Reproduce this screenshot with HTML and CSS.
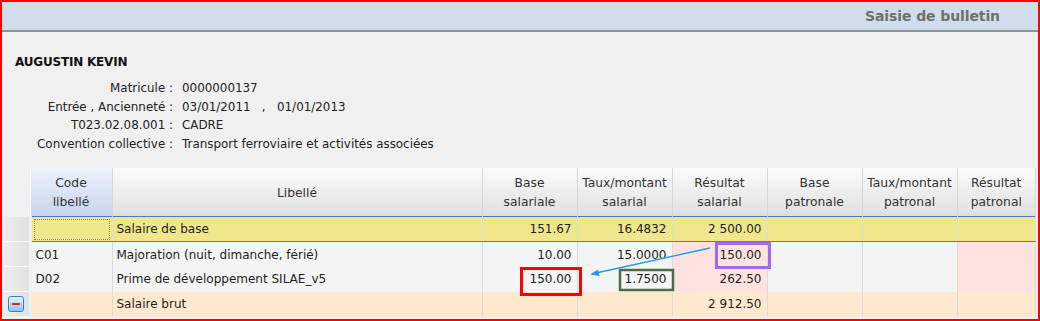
FILE: index.html
```html
<!DOCTYPE html>
<html lang="fr">
<head>
  <meta charset="UTF-8">
  <title>Saisie de bulletin</title>
  <link rel="stylesheet" href="styles.css">
</head>
<body>
  <div class="frame">
    <header class="titlebar">
      <h1>Saisie de bulletin</h1>
    </header>

    <section class="employee">
      <div class="name">AUGUSTIN KEVIN</div>
      <dl class="info">
        <dt>Matricule :</dt><dd>0000000137</dd>
        <dt>Entrée , Ancienneté :</dt><dd>03/01/2011 &nbsp;&nbsp;, &nbsp;&nbsp;01/01/2013</dd>
        <dt>T023.02.08.001 :</dt><dd>CADRE</dd>
        <dt>Convention collective :</dt><dd>Transport ferroviaire et activités associées</dd>
      </dl>
    </section>

    <div class="grid-wrap">
      <table class="grid">
        <colgroup>
          <col class="c-row"><col class="c-code"><col class="c-lib">
          <col class="c-num"><col class="c-num"><col class="c-num">
          <col class="c-num"><col class="c-num"><col>
        </colgroup>
        <thead>
          <tr>
            <th class="rowhead"></th>
            <th class="selected">Code<br>libellé</th>
            <th>Libellé</th>
            <th>Base<br>salariale</th>
            <th>Taux/montant<br>salarial</th>
            <th>Résultat<br>salarial</th>
            <th>Base<br>patronale</th>
            <th>Taux/montant<br>patronal</th>
            <th>Résultat<br>patronal</th>
          </tr>
        </thead>
        <tbody>
          <tr class="base">
            <td class="rowhead"></td>
            <td class="focus"><span></span></td>
            <td>Salaire de base</td>
            <td class="num">151.67</td>
            <td class="num">16.4832</td>
            <td class="num">2 500.00</td>
            <td></td><td></td><td></td>
          </tr>
          <tr>
            <td class="rowhead"></td>
            <td>C01</td>
            <td>Majoration (nuit, dimanche, férié)</td>
            <td class="num">10.00</td>
            <td class="num">15.0000</td>
            <td class="num res">150.00</td>
            <td></td><td></td><td class="res"></td>
          </tr>
          <tr>
            <td class="rowhead"></td>
            <td>D02</td>
            <td>Prime de développement SILAE_v5</td>
            <td class="num">150.00</td>
            <td class="num">1.7500</td>
            <td class="num res">262.50</td>
            <td></td><td></td><td class="res"></td>
          </tr>
          <tr class="total">
            <td class="rowhead"><span class="collapse"></span></td>
            <td></td>
            <td>Salaire brut</td>
            <td></td><td></td>
            <td class="num">2 912.50</td>
            <td></td><td></td><td></td>
          </tr>
        </tbody>
      </table>

      <!-- annotations drawn over the grid -->
      <svg class="marks" width="1032" height="150" viewBox="0 0 1032 150">
        <rect x="712.5" y="75.5" width="53" height="24" fill="none" stroke="#9b6cf2" stroke-width="3"/>
        <rect x="517.5" y="100.5" width="59" height="26" fill="none" stroke="#ff0000" stroke-width="3"/>
        <rect x="616" y="102" width="53" height="20" fill="none" stroke="#4e6b4c" stroke-width="2.5"/>
        <line x1="706" y1="80" x2="592" y2="105" stroke="#1e9be8" stroke-width="1.3"/>
        <path d="M586 106.5 L594 101.5 L595.5 108 Z" fill="#1e9be8"/>
      </svg>
    </div>
  </div>
</body>
</html>
```

FILE: styles.css
```css
/* reset */
* { margin:0; padding:0; box-sizing:border-box }
html, body { height:100%; }
body { background:#fff; }

/* outer red frame */
.frame {
  width:1040px; height:321px;
  border:2px solid #ff0000;
  background:#f0f0f0;
  overflow:hidden;
  font-family:"DejaVu Sans", sans-serif;
  color:#222;
}

/* title bar */
.titlebar {
  height:30px;
  background:#d0dded;
  border-bottom:2px solid #8e9398;
  display:flex; justify-content:flex-end; align-items:center;
  padding-right:38px;
}
.titlebar h1 {
  font-size:14px; font-weight:bold;
  color:#6f6f6f;
  letter-spacing:-0.1px;
}

/* employee block */
.employee { padding:21px 0 0 13px; }
.name {
  font-size:12px; font-weight:bold;
  line-height:19px;
  color:#111;
  letter-spacing:-0.2px;
}
.info {
  display:grid;
  grid-template-columns:158px auto;
  column-gap:9px;
  margin-top:7px;
  font-size:11.9px;
  line-height:18.7px;
  color:#222;
}
.info dt { text-align:right; white-space:nowrap; }

/* grid */
.grid-wrap {
  position:relative;
  margin:14px 0 0 2px;
  width:1032px;
}
.grid {
  width:1032px;
  table-layout:fixed;
  border-collapse:collapse;
  font-size:12px;
}
.c-row  { width:26px; }
.c-code { width:82px; }
.c-lib  { width:370px; }
.c-num  { width:95px; }

.grid th {
  height:49px;
  font-weight:normal;
  font-size:12.3px;
  line-height:19px;
  color:#333;
  background:linear-gradient(#fbfbfb, #dfdfdf);
  border-right:1px solid #d6d6d6;
  border-left:1px solid #fff;
  text-align:center;
  padding-top:2px;
}
.grid th.selected { background:linear-gradient(#eef3fb, #c6d4ea); }
.grid th.rowhead { background:#f0f0f0; border:none; }

.grid td {
  height:25px;
  padding:0 4px;
  background:#f4f4f4;
  border-right:1px solid #dcdcdc;
  white-space:nowrap;
  color:#1e1e1e;
}
.grid td.num { text-align:right; padding-right:5px; }
.grid td.res { background:#fde2df; }

.grid td.rowhead {
  padding:0 0 0 4px;
  background:linear-gradient(90deg, #ececec, #e2e2e2);
  border-right:3px solid #f0f0f0;
  border-bottom:1px solid #fafafa;
}

.grid tr.base td {
  background:#f0e68c;
  border-top:1px solid #4a78d8;
  border-bottom:1px solid #4a78d8;
}
.grid tr.base td.rowhead {
  background:linear-gradient(90deg, #ececec, #e2e2e2);
  border-top:none; border-bottom:1px solid #fafafa;
}
.grid td.focus { padding:1px 2px; }
.grid td.focus span {
  display:block; height:21px;
  border:1px dotted #8a8a6a;
}

.grid tr.total td { background:#fee9cf; }
.grid tr.total td.rowhead { background:linear-gradient(90deg, #ececec, #e2e2e2); }

/* collapse button */
.collapse {
  display:block;
  width:16px; height:16px;
  border:1px solid #3f7fbf; border-radius:3px;
  background:linear-gradient(#e3f2fd, #8ec6ef);
  position:relative;
}
.collapse::after {
  content:"";
  position:absolute; left:3px; top:6px;
  width:8px; height:2px;
  background:#e0241c;
}

/* annotation layer */
.marks {
  position:absolute; left:0; top:0;
  pointer-events:none;
}
```
